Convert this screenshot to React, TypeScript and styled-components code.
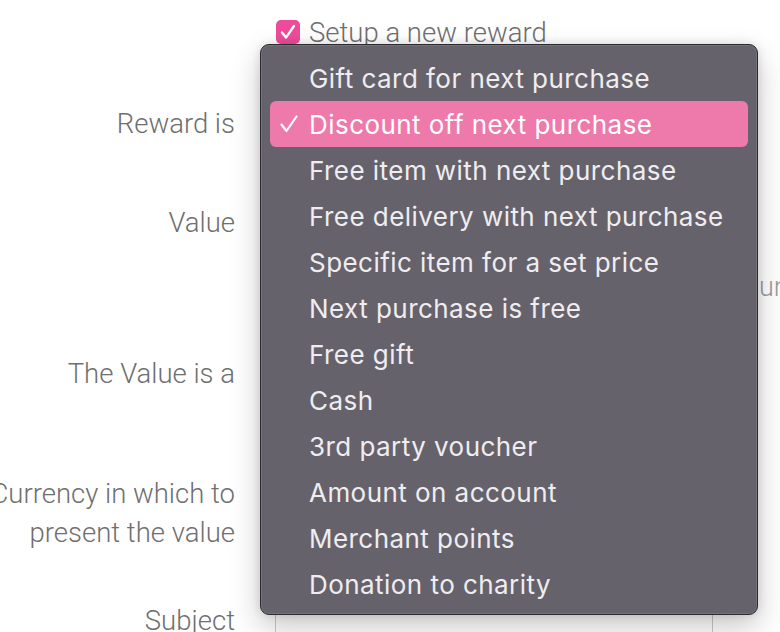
import React from 'react';
import styled, { createGlobalStyle } from 'styled-components';

const GlobalStyle = createGlobalStyle`
  html, body {
    margin: 0;
    padding: 0;
    background: #ffffff;
    overflow: hidden;
  }
`;

// Page and form behind the menu

const Page = styled.div`
  position: relative;
  width: 780px;
  height: 632px;
  overflow: hidden;
  font-family: Roboto, "Liberation Sans", sans-serif;
`;

interface FormRowProps {
  height: number;
}
const FormRow = styled.div<FormRowProps>`
  display: grid;
  grid-template-columns: 235px 438px 120px;
  column-gap: 40px;
  align-items: center;
  height: ${props => props.height}px;
`;

const Label = styled.div`
  justify-self: end;
  text-align: right;
  font-size: 27.5px;
  font-weight: 300;
  line-height: 39px;
  color: #6f6f6f;
  white-space: nowrap;
`;

const CheckField = styled.label`
  display: flex;
  align-items: center;
  gap: 9px;
  margin-left: 1px;
  font-size: 27.5px;
  font-weight: 300;
  color: #6f6f6f;
  white-space: nowrap;
`;

const CheckBox = styled.span`
  display: flex;
  align-items: center;
  justify-content: center;
  width: 24px;
  height: 24px;
  border-radius: 5px;
  background: #ee4c9b;
`;

// Hint beside the value field; its start is hidden behind the menu
const Hint = styled.div`
  margin-left: -50px;
  font-size: 27px;
  font-weight: 300;
  color: #9c9c9c;
  white-space: nowrap;
`;

const TextInput = styled.div`
  height: 44px;
  border: 1px solid #c9c9c9;
  border-radius: 4px;
  background: #ffffff;
`;

// Popup menu

const Menu = styled.ul`
  position: absolute;
  left: 260px;
  top: 44px;
  width: 498px;
  height: 571px;
  box-sizing: border-box;
  margin: 0;
  padding: 10px 9px 8px;
  list-style: none;
  background: #66626b;
  border: 1px solid #2b2a2e;
  border-radius: 9px;
  box-shadow:
    inset 0 0 0 1px rgba(255, 255, 255, 0.1),
    0 12px 30px rgba(0, 0, 0, 0.22),
    0 0 10px rgba(0, 0, 0, 0.12);
  font-family: Inter, "Noto Sans", sans-serif;
`;

interface MenuItemProps {
  selected?: boolean;
}
const MenuItem = styled.li<MenuItemProps>`
  display: flex;
  align-items: center;
  height: 46px;
  padding-left: 9px;
  border-radius: 6px;
  background: ${props => (props.selected ? '#ee79ab' : 'transparent')};
  color: ${props => (props.selected ? '#ffffff' : '#efedf0')};
  font-size: 26px;
  letter-spacing: 0.45px;
  white-space: nowrap;
`;

const CheckSlot = styled.span`
  display: flex;
  align-items: center;
  width: 30px;
  flex: none;
`;

const Check = ({ size, width }: { size: number; width: number }) => (
  <svg width={size} height={size} viewBox="0 0 20 20" fill="none">
    <path d="M2.5 10.5 L7.5 17 L17.5 2.5" stroke="#ffffff" strokeWidth={width} strokeLinecap="round" strokeLinejoin="round" />
  </svg>
);

const rewards = [
  'Gift card for next purchase',
  'Discount off next purchase',
  'Free item with next purchase',
  'Free delivery with next purchase',
  'Specific item for a set price',
  'Next purchase is free',
  'Free gift',
  'Cash',
  '3rd party voucher',
  'Amount on account',
  'Merchant points',
  'Donation to charity',
];

export default function App() {
  const selected = 1;

  return (
    <Page>
      <GlobalStyle />
      <FormRow height={64}>
        <span />
        <CheckField>
          <CheckBox>
            <Check size={16} width={3} />
          </CheckBox>
          Setup a new reward
        </CheckField>
      </FormRow>
      <FormRow height={118}>
        <Label>Reward is</Label>
      </FormRow>
      <FormRow height={80}>
        <Label>Value</Label>
      </FormRow>
      <FormRow height={50}>
        <span />
        <span />
        <Hint>Amount</Hint>
      </FormRow>
      <FormRow height={122}>
        <Label>The Value is a</Label>
      </FormRow>
      <FormRow height={158}>
        <Label>
          Currency in which to
          <br />
          present the value
        </Label>
      </FormRow>
      <FormRow height={56}>
        <Label>Subject</Label>
        <TextInput />
      </FormRow>

      <Menu>
        {rewards.map((name, id) => (
          <MenuItem key={id} selected={id === selected}>
            <CheckSlot>{id === selected && <Check size={20} width={2.2} />}</CheckSlot>
            {name}
          </MenuItem>
        ))}
      </Menu>
    </Page>
  );
}
